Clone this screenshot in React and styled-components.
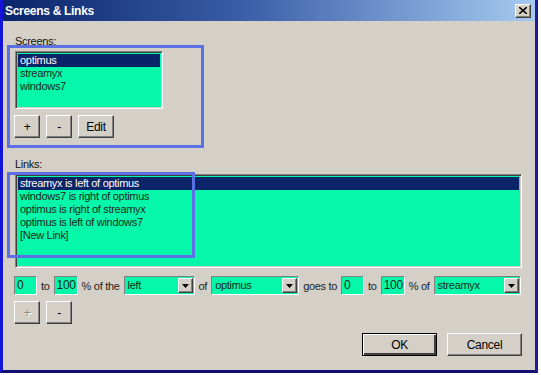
import React from "react";
import styled, { createGlobalStyle } from "styled-components";

const green = "#05f8a9";
const face = "#d4d0c8";
const navy = "#0a246a";

const GlobalStyle = createGlobalStyle`
  body {
    margin: 0;
    background: #ffffff;
    font-family: "Liberation Sans", Arial, sans-serif;
    font-size: 11px;
    letter-spacing: -0.3px;
    color: #000;
  }
`;

const screens = ["optimus", "streamyx", "windows7"];
const links = [
  "streamyx is left of optimus",
  "windows7 is right of optimus",
  "optimus is right of streamyx",
  "optimus is left of windows7",
  "[New Link]",
];

export default function App() {
  return (
    <>
      <GlobalStyle />
      <Window>
        <TitleBar>
          <Title>Screens &amp; Links</Title>
          <CloseButton>
            <svg width="8" height="7" viewBox="0 0 8 7">
              <path d="M0 0 L8 7 M8 0 L0 7" stroke="#000" strokeWidth="1.6" />
            </svg>
          </CloseButton>
        </TitleBar>
        <Body>
          <Label>Screens:</Label>
          <ListBox $width={148} $height={58}>
            {screens.map((s, i) => (
              <ListItem key={s} $selected={i === 0}>
                {s}
              </ListItem>
            ))}
          </ListBox>
          <ButtonRow>
            <Button $width={26}>+</Button>
            <Button $width={26}>-</Button>
            <Button $width={36}>Edit</Button>
          </ButtonRow>

          <Label $top={19}>Links:</Label>
          <ListBox $height={94}>
            {links.map((l, i) => (
              <ListItem key={l} $selected={i === 0}>
                {l}
              </ListItem>
            ))}
          </ListBox>

          <ControlRow>
            <Field $width={23}>0</Field>
            <Word>to</Word>
            <Field $width={24}>100</Field>
            <Word>% of the</Word>
            <Select $width={71} value="left" />
            <Word>of</Word>
            <Select $width={88} value="optimus" />
            <Word>goes to</Word>
            <Field $width={23}>0</Field>
            <Word>to</Word>
            <Field $width={24}>100</Field>
            <Word>% of</Word>
            <Select $width={87} value="streamyx" />
          </ControlRow>

          <ButtonRow>
            <Button $width={26} $disabled>
              +
            </Button>
            <Button $width={26}>-</Button>
          </ButtonRow>

          <Footer>
            <Button $width={75} $default>
              OK
            </Button>
            <Button $width={75}>Cancel</Button>
          </Footer>

          <Annotation style={{ left: 4, top: 24, width: 197, height: 103 }} />
          <Annotation style={{ left: 4, top: 151, width: 188, height: 86 }} />
        </Body>
      </Window>
    </>
  );
}

function Select({ value, $width }) {
  return (
    <SelectBox $width={$width}>
      <SelectValue>{value}</SelectValue>
      <ArrowButton>
        <svg width="7" height="4" viewBox="0 0 7 4">
          <path d="M0 0 H7 L3.5 4 Z" fill="#000" />
        </svg>
      </ArrowButton>
    </SelectBox>
  );
}

const Window = styled("div")`
  position: relative;
  width: 538px;
  height: 373px;
  box-sizing: border-box;
  background: ${face};
  border-left: 3px solid #1414d8;
  border-right: 3px solid #1c1c9a;
  border-bottom: 3px solid #10106e;
  display: flex;
  flex-direction: column;
`;

const TitleBar = styled("div")`
  height: 21px;
  flex: none;
  display: flex;
  align-items: center;
  justify-content: space-between;
  padding: 0 4px 0 2px;
  background: linear-gradient(90deg, ${navy} 0%, #3a5ea8 45%, #a6caf0 100%);
`;

const Title = styled("span")`
  color: #ffffff;
  font-weight: bold;
  font-size: 12px;
  letter-spacing: -0.3px;
`;

const CloseButton = styled("div")`
  width: 16px;
  height: 14px;
  box-sizing: border-box;
  background: ${face};
  display: flex;
  align-items: center;
  justify-content: center;
  border: 1px solid;
  border-color: #fff #404040 #404040 #fff;
  box-shadow: inset -1px -1px 0 #808080;
`;

const Body = styled("div")`
  position: relative;
  flex: 1;
  display: flex;
  flex-direction: column;
  padding: 13px 13px 0 12px;
`;

const Label = styled("div")`
  line-height: 14px;
  height: 14px;
  margin-top: ${(p) => p.$top || 0}px;
  margin-bottom: 3px;
  color: #111;
`;

const ListBox = styled("div")`
  width: ${(p) => (p.$width ? `${p.$width}px` : "auto")};
  height: ${(p) => p.$height}px;
  box-sizing: border-box;
  background: ${green};
  border: 1px solid;
  border-color: #808080 #ffffff #ffffff #808080;
  box-shadow: inset 1px 1px 0 #404040, inset -1px -1px 0 ${face};
  padding: 2px 2px;
`;

const ListItem = styled("div")`
  height: 13px;
  line-height: 13px;
  padding-left: 2px;
  color: ${(p) => (p.$selected ? "#ffffff" : "#1a2a20")};
  background: ${(p) => (p.$selected ? navy : "transparent")};
  white-space: nowrap;
`;

const ButtonRow = styled("div")`
  display: flex;
  gap: 6px;
  margin: 6px 0 0 -1px;
`;

const Button = styled("div")`
  width: ${(p) => p.$width}px;
  height: 23px;
  box-sizing: border-box;
  display: flex;
  align-items: center;
  justify-content: center;
  background: ${face};
  color: ${(p) => (p.$disabled ? "#8a8a8a" : "#000")};
  text-shadow: ${(p) => (p.$disabled ? "1px 1px 0 #fff" : "none")};
  font-size: 12px;
  border: 1px solid;
  border-color: ${(p) =>
    p.$default ? "#000" : "#ffffff #404040 #404040 #ffffff"};
  box-shadow: ${(p) =>
    p.$default
      ? "inset 1px 1px 0 #fff, inset -2px -2px 0 #404040"
      : "inset -1px -1px 0 #808080"};
`;

const ControlRow = styled("div")`
  display: flex;
  align-items: center;
  height: 19px;
  margin: 8px 0 0 -1px;
  gap: 4px;
  white-space: nowrap;
`;

const Word = styled("span")`
  font-size: 11px;
  color: #222;
`;

const Field = styled("div")`
  width: ${(p) => p.$width}px;
  height: 19px;
  box-sizing: border-box;
  background: ${green};
  border: 1px solid;
  border-color: #808080 #ffffff #ffffff #808080;
  padding: 0 2px;
  line-height: 17px;
  font-size: 12px;
  color: #1a2a20;
`;

const SelectBox = styled("div")`
  width: ${(p) => p.$width}px;
  height: 19px;
  box-sizing: border-box;
  display: flex;
  align-items: stretch;
  background: ${green};
  border: 1px solid;
  border-color: #808080 #ffffff #ffffff #808080;
  padding: 1px;
`;

const SelectValue = styled("span")`
  flex: 1;
  padding-left: 2px;
  line-height: 15px;
  font-size: 11px;
  color: #1a2a20;
`;

const ArrowButton = styled("div")`
  width: 15px;
  box-sizing: border-box;
  display: flex;
  align-items: center;
  justify-content: center;
  background: ${face};
  border: 1px solid;
  border-color: #ffffff #404040 #404040 #ffffff;
  box-shadow: inset -1px -1px 0 #808080;
`;

const Footer = styled("div")`
  display: flex;
  justify-content: flex-end;
  gap: 10px;
  margin-top: 9px;
`;

const Annotation = styled("div")`
  position: absolute;
  box-sizing: border-box;
  border: 3px solid #5b70e2;
  pointer-events: none;
`;
